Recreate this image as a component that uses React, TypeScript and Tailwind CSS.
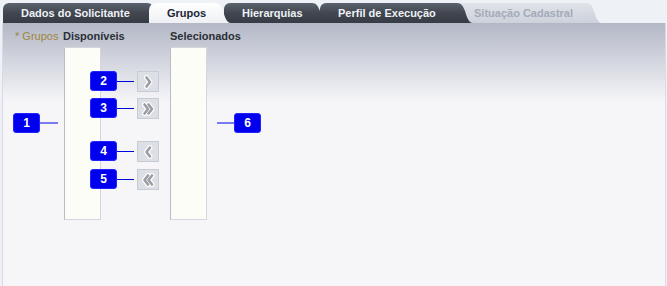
import React from "react";

type Variant = "dark" | "active" | "disabled";

const tabs: { label: string; variant: Variant; w: string; ml: string; z: string }[] = [
    { label: "Dados do Solicitante", variant: "dark", w: "w-[142px]", ml: "ml-[3px]", z: "z-40" },
    { label: "Grupos", variant: "active", w: "w-[64px]", ml: "-ml-[14px]", z: "z-50" },
    { label: "Hierarquias", variant: "dark", w: "w-[86px]", ml: "-ml-[7px]", z: "z-30" },
    { label: "Perfil de Execução", variant: "dark", w: "w-[135px]", ml: "-ml-[8px]", z: "z-20" },
    { label: "Situação Cadastral", variant: "disabled", w: "w-[128px]", ml: "-ml-[17px]", z: "z-10" },
];

const bodyStyles: Record<Variant, string> = {
    dark: "bg-linear-to-b from-[#5d636f] via-[#41464f] to-[#363b45] text-[#eef1f7]",
    active: "bg-linear-to-b from-white to-[#eef0f4] text-[#1c2636]",
    disabled: "bg-linear-to-b from-[#e0e3ea] to-[#cdd1da] text-[#a3aab8]",
};

const stops: Record<Variant, [string, string, string]> = {
    dark: ["#5d636f", "#41464f", "#363b45"],
    active: ["#ffffff", "#f6f7f9", "#eef0f4"],
    disabled: ["#e0e3ea", "#d6d9e1", "#cdd1da"],
};

function Tab({ label, variant, w, ml, z, idx }: { label: string; variant: Variant; w: string; ml: string; z: string; idx: number }) {
    const id = `tabgrad-${idx}`;
    const [a, b, c] = stops[variant];
    return (
        <div className={`relative flex h-5 ${ml} ${z}`}>
            <div
                className={`${w} h-5 ${variant === "active" ? "rounded-tl-[7px]" : "rounded-tl-[6px]"} ${bodyStyles[variant]} pl-[18px] text-[11px] font-bold leading-5 whitespace-nowrap`}
            >
                {label}
            </div>
            <svg width="18" height="20" viewBox="0 0 18 20" className="block">
                <defs>
                    <linearGradient id={id} x1="0" y1="0" x2="0" y2="1">
                        <stop offset="0" stopColor={a} />
                        <stop offset="0.5" stopColor={b} />
                        <stop offset="1" stopColor={c} />
                    </linearGradient>
                </defs>
                <path d="M0 0 H2 C6.5 0 8 3 10 8 C12 14 13.5 20 18 20 H0 Z" fill={`url(#${id})`} />
            </svg>
        </div>
    );
}

function Chevron({ double, left }: { double?: boolean; left?: boolean }) {
    const one = double
        ? left ? "7,2.5 3.5,7 7,11.5" : "3.5,2.5 7,7 3.5,11.5"
        : left ? "9,2.5 5.5,7 9,11.5" : "5.5,2.5 9,7 5.5,11.5";
    const two = left ? "11,2.5 7.5,7 11,11.5" : "7.5,2.5 11,7 7.5,11.5";
    return (
        <svg width="14" height="14" viewBox="0 0 14 14">
            <g fill="none" strokeLinecap="round" strokeLinejoin="round">
                <polyline points={one} stroke="#ffffff" strokeWidth="4.8" />
                {double && <polyline points={two} stroke="#ffffff" strokeWidth="4.8" />}
                <polyline points={one} stroke="#9a9ca3" strokeWidth="2.6" />
                {double && <polyline points={two} stroke="#9a9ca3" strokeWidth="2.6" />}
            </g>
        </svg>
    );
}

function MoveButton({ double, left, className }: { double?: boolean; left?: boolean; className?: string }) {
    return (
        <button
            className={`flex h-[21px] w-[22px] items-center justify-center border border-[#c8cbd2] bg-[#dcdfe5] ${className ?? ""}`}
        >
            <Chevron double={double} left={left} />
        </button>
    );
}

function Badge({ n }: { n: string }) {
    return (
        <div className="flex h-5 w-[27px] items-center justify-center rounded-[3px] border border-[#2323ff] bg-[#0000ee] text-[12px] font-bold text-white">
            {n}
        </div>
    );
}

function Callout({ n, pos, line, light }: { n: string; pos: string; line: string; light?: boolean }) {
    return (
        <div className={`absolute flex items-center ${pos}`}>
            <Badge n={n} />
            <div className={`${line} ${light ? "h-[2px] bg-[#7a7af0]" : "h-px bg-[#0000dd]"}`} />
        </div>
    );
}

function Listbox() {
    return <div className="h-[173px] w-[37px] border border-[#d3d6dc] border-l-[#b7bcc6] bg-[#fdfdf8]" />;
}

export default function App() {
    return (
        <div className="relative flex h-[286px] w-[667px] flex-col overflow-hidden bg-[#eef1f5] font-['Liberation_Sans',Arial,sans-serif]">
            <div className="flex h-[23px] items-end">
                {tabs.map((t, i) => (
                    <Tab key={t.label} idx={i} {...t} />
                ))}
            </div>

            <div className="ml-[2px] mr-px flex-1 border-x border-[#d6dbe6] bg-linear-to-b from-[#b3b8c6] to-[#f6f6f9] to-30% pl-3 pt-[7px]">
                <div className="flex text-[11px] leading-[13px]">
                    <div className="w-[48px] text-[#a0843f]">* Grupos</div>

                    <div className="w-[74px]">
                        <div className="font-bold text-[#2b2f36]">Disponíveis</div>
                        <div className="ml-px mt-1">
                            <Listbox />
                        </div>
                    </div>

                    <div className="mt-[41px] flex w-[22px] flex-col">
                        <MoveButton />
                        <MoveButton double className="mt-[6px]" />
                        <MoveButton left className="mt-[22px]" />
                        <MoveButton double left className="mt-[7px]" />
                    </div>

                    <div className="ml-[11px]">
                        <div className="font-bold text-[#2b2f36]">Selecionados</div>
                        <div className="mt-1">
                            <Listbox />
                        </div>
                    </div>
                </div>
            </div>

            <Callout n="1" pos="left-[13px] top-[113px]" line="w-[18px]" light />
            <Callout n="2" pos="left-[90px] top-[71px]" line="w-[17px]" />
            <Callout n="3" pos="left-[90px] top-[98px]" line="w-[17px]" />
            <Callout n="4" pos="left-[90px] top-[141px]" line="w-[17px]" />
            <Callout n="5" pos="left-[90px] top-[169px]" line="w-[17px]" />
            <div className="absolute left-[217px] top-[113px] flex items-center">
                <div className="h-[2px] w-[17px] bg-[#7a7af0]" />
                <Badge n="6" />
            </div>
        </div>
    );
}
